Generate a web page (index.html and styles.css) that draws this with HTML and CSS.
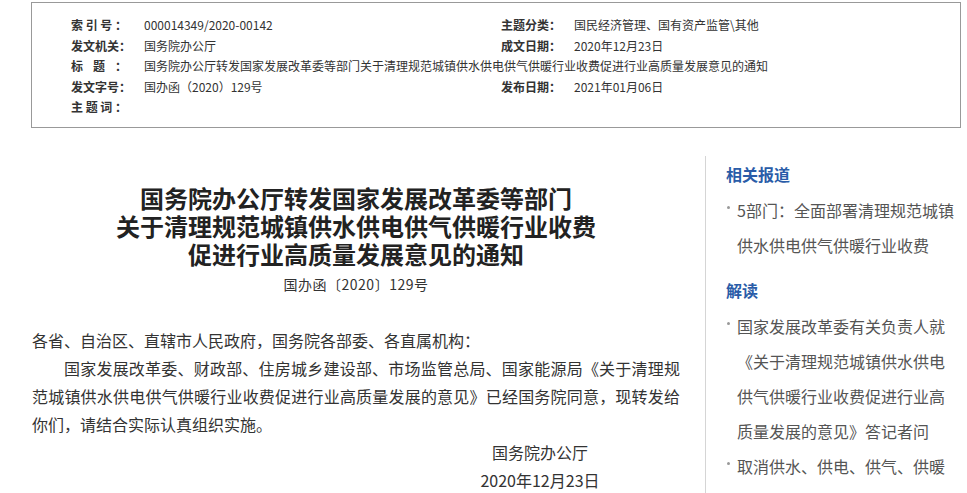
FILE: index.html
```html
<!DOCTYPE html>
<html lang="zh-CN">

<head>
    <meta charset="UTF-8">
    <meta name="viewport" content="width=device-width, initial-scale=1.0">
    <title>国务院办公厅转发国家发展改革委等部门关于清理规范城镇供水供电供气供暖行业收费促进行业高质量发展意见的通知</title>
    <link rel="stylesheet" href="styles.css">
</head>

<body>
    <div class="page">
        <!-- 信息公开目录 -->
        <div class="meta">
            <div class="meta-grid">
                <div class="field"><span class="label">索引号：</span><span class="value">000014349/2020-00142</span></div>
                <div class="field"><span class="label">主题分类：</span><span class="value">国民经济管理、国有资产监管\其他</span></div>
                <div class="field"><span class="label">发文机关：</span><span class="value">国务院办公厅</span></div>
                <div class="field"><span class="label">成文日期：</span><span class="value">2020年12月23日</span></div>
                <div class="field wide"><span class="label">标题：</span><span class="value">国务院办公厅转发国家发展改革委等部门关于清理规范城镇供水供电供气供暖行业收费促进行业高质量发展意见的通知</span></div>
                <div class="field"><span class="label">发文字号：</span><span class="value">国办函（2020）129号</span></div>
                <div class="field"><span class="label">发布日期：</span><span class="value">2021年01月06日</span></div>
                <div class="field"><span class="label">主题词：</span><span class="value"></span></div>
            </div>
        </div>

        <div class="content">
            <div class="article">
                <h1 class="title">国务院办公厅转发国家发展改革委等部门<br>关于清理规范城镇供水供电供气供暖行业收费<br>促进行业高质量发展意见的通知</h1>
                <div class="docno">国办函〔2020〕129号</div>

                <div class="body-text">
                    <p>各省、自治区、直辖市人民政府，国务院各部委、各直属机构：</p>
                    <p>
                        <span class="line first">国家发展改革委、财政部、住房城乡建设部、市场监管总局、国家能源局《关于清理规</span>
                        <span class="line">范城镇供水供电供气供暖行业收费促进行业高质量发展的意见》已经国务院同意，现转发给</span>
                        <span class="line last">你们，请结合实际认真组织实施。</span>
                    </p>
                </div>

                <div class="sign">
                    <p>国务院办公厅</p>
                    <p>2020年12月23日</p>
                </div>
            </div>

            <div class="aside">
                <h3 class="aside-title">相关报道</h3>
                <ul class="aside-list">
                    <li>5部门：全面部署清理规范城镇供水供电供气供暖行业收费</li>
                </ul>
                <h3 class="aside-title">解读</h3>
                <ul class="aside-list">
                    <li>国家发展改革委有关负责人就《关于清理规范城镇供水供电供气供暖行业收费促进行业高质量发展的意见》答记者问</li>
                    <li>取消供水、供电、供气、供暖</li>
                </ul>
            </div>
        </div>
    </div>
</body>

</html>
```

FILE: styles.css
```css
body {
    margin: 0;
    font-family: "Noto Sans CJK SC", "Liberation Sans", sans-serif;
    color: #333;
    background: #fff;
    overflow: hidden;
}

p {
    margin: 0;
}

.page {
    width: 930px;
    margin: 2px 0 0 31px;
}

/* meta box */
.meta {
    border: 1px solid #999;
    padding: 12px 0 9px 39px;
}

.meta-grid {
    display: grid;
    grid-template-columns: 430px 1fr;
}

.field {
    font-size: 12px;
    line-height: 20.5px;
    white-space: nowrap;
}

.field.wide {
    grid-column: span 2;
}

.label {
    display: inline-block;
    width: 56px;
    margin-right: 17px;
    font-weight: bold;
    color: #333;
    text-align: justify;
    text-align-last: justify;
    vertical-align: top;
}

.value {
    color: #333;
}

/* main content */
.content {
    display: flex;
    margin-top: 28px;
}

.article {
    width: 648px;
    margin-left: 1px;
    padding-top: 28px;
}

.title {
    margin: 0;
    font-size: 24px;
    line-height: 28px;
    font-weight: bold;
    color: #222;
    text-align: center;
}

.docno {
    margin-top: 6px;
    font-size: 14px;
    line-height: 20px;
    letter-spacing: 0.5px;
    text-align: center;
    color: #333;
}

.body-text {
    margin-top: 32px;
    font-size: 16px;
    line-height: 28px;
    color: #333;
}

.line {
    display: block;
    text-align: justify;
    text-align-last: justify;
}

.line.first {
    text-indent: 2em;
}

.line.last {
    text-align-last: left;
}

.sign {
    width: 200px;
    margin: 0 40px 0 auto;
    font-size: 16px;
    line-height: 28px;
    text-align: center;
}

/* sidebar */
.aside {
    margin-left: 25px;
    padding: 6px 0 0 20px;
    border-left: 1px solid #d5d5d5;
    min-height: 400px;
}

.aside-title {
    margin: 0;
    font-size: 16px;
    line-height: 24px;
    font-weight: bold;
    color: #2a5ca8;
}

.aside-list {
    list-style: none;
    margin: 7px 0 15px;
    padding: 0 0 0 11px;
    width: 220px;
}

.aside-list li {
    position: relative;
    font-size: 16px;
    line-height: 35px;
    color: #555;
}

.aside-list li::before {
    content: "";
    position: absolute;
    left: -10px;
    top: 13px;
    width: 3px;
    height: 3px;
    border-radius: 50%;
    background: #999;
}
```
